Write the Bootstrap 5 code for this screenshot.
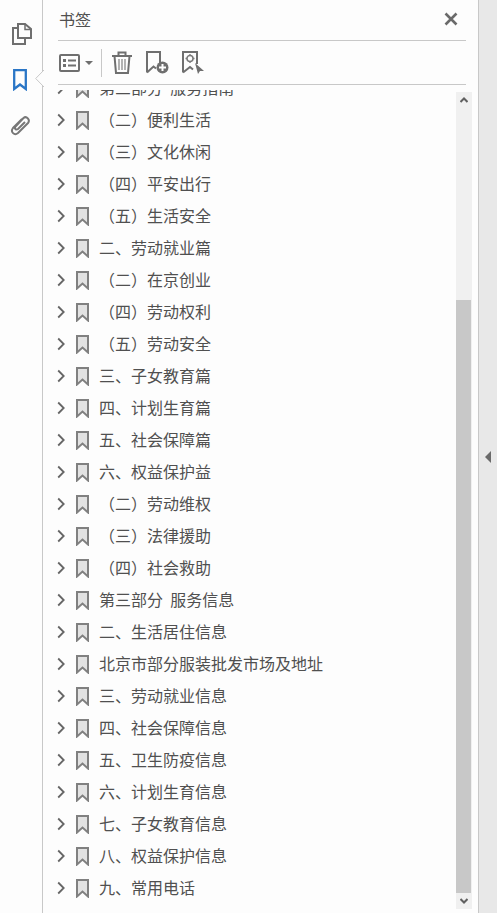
<!DOCTYPE html>
<html lang="zh">
<head>
<meta charset="utf-8">
<title>书签</title>
<link href="https://cdn.jsdelivr.net/npm/bootstrap@5.3.0/dist/css/bootstrap.min.css" rel="stylesheet">
<style>
html,body{height:100%;overflow:hidden;}
body{background:#fdfdfd;color:#505050;font-family:"Noto Sans CJK SC","Liberation Sans",sans-serif;font-size:16px;line-height:1;}
.shell{height:913px;}
.rail{width:43px;border-right:1px solid #c8c8c8;padding-top:22px;gap:24px;}
.rail svg{display:block;}
.ico-pages{margin-left:12px;}
.ico-mark{margin-left:13px;}
.ico-clip{margin-left:10px;}
.notch{position:absolute;left:35px;top:70px;width:9px;height:17px;}
.pane{width:435px;padding-left:14px;}
.strip{width:19px;background:#e8e8e8;border-left:1px solid #c8c8c8;}
.strip svg{margin-top:451px;margin-left:6px;display:block;}
.head{height:41px;width:408px;margin-left:1px;border-bottom:1px solid #c8c8c8;padding:0 0 3px 1px;}
.tools{height:44px;width:408px;margin-left:1px;border-bottom:1px solid #c8c8c8;padding-left:1px;}
.caret-ico{margin-left:5px;}
.sep{width:1px;height:28px;background:#c8c8c8;margin-left:8px;}
.ico-trash{margin-left:9px;}
.ico-add{margin-left:13px;}
.ico-find{margin-left:13px;}
.body-area{height:828px;}
.scroller{width:399px;height:819px;margin-top:5px;overflow:hidden;}
.tree{margin-top:-18px;}
.node{height:32px;}
.node-mark{margin:0 10px 0 11px;}
.rowtxt{white-space:pre;position:relative;top:-1px;}
.sbar{width:16px;height:817px;margin-top:7px;background:#f0f0f0;}
.sbtn{height:16px;}
.gap-top{height:192px;}
.thumb{width:15px;background:#c8c8c8;flex:1;}
</style>
</head>
<body>
<svg width="0" height="0" class="d-block position-absolute">
  <symbol id="bm" viewBox="0 0 13 19">
    <path d="M1 1H12V17.500L6.500 12.500L1 17.500Z" fill="#e2e2e2" stroke="#808080" stroke-width="2"/>
  </symbol>
  <symbol id="chev" viewBox="0 0 8 14">
    <path d="M1.200 1.500L6.700 7L1.200 12.500" fill="none" stroke="#666" stroke-width="1.800"/>
  </symbol>
</svg>
<div class="shell d-flex position-relative">
  <div class="rail d-flex flex-column align-items-start flex-shrink-0">
    <svg class="ico-pages" width="20" height="23" viewBox="0 0 20 23"><path d="M6 2H13L19 7V16H6Z" fill="none" stroke="#6f6f6f" stroke-width="2"/><path d="M13 1.500V7.500H19" fill="none" stroke="#6f6f6f" stroke-width="1.500"/><path d="M6 6H1V22H13V16" fill="none" stroke="#6f6f6f" stroke-width="2"/></svg>
    <svg class="ico-mark" width="14" height="22" viewBox="0 0 14 22"><path d="M1.200 1.200H12.800V20L7 15.500L1.200 20Z" fill="none" stroke="#2a76c6" stroke-width="2.300"/></svg>
    <svg class="ico-clip" width="21" height="21" viewBox="0 0 21 21"><path d="M12 4L3 13C0 17 4.500 21 8 18L18 8C20.500 5 16.500 0.500 13.500 3L5.500 11.500C4 13.500 6 15.500 8 14L15 7" fill="none" stroke="#777" stroke-width="2"/></svg>
  </div>
  <svg class="notch" viewBox="0 0 9 17"><path d="M9 0L0.700 8.500L9 17" fill="#fdfdfd" stroke="#c8c8c8" stroke-width="1"/></svg>
  <div class="pane flex-shrink-0">
    <div class="head d-flex align-items-center justify-content-between">
      <span>书签</span>
      <svg class="me-2" width="14" height="14" viewBox="0 0 14 14"><path d="M1.500 1.500L12.500 12.500M12.500 1.500L1.500 12.500" stroke="#6a6a6a" stroke-width="2.600"/></svg>
    </div>
    <div class="tools d-flex align-items-center">
      <svg width="21" height="18" viewBox="0 0 21 18"><rect x="1" y="1" width="19" height="16" rx="1" fill="none" stroke="#6f6f6f" stroke-width="2"/><rect x="4" y="5" width="3" height="3" fill="#6f6f6f"/><rect x="4" y="10" width="3" height="3" fill="#6f6f6f"/><rect x="9" y="5.500" width="8" height="2" fill="#6f6f6f"/><rect x="9" y="10.500" width="8" height="2" fill="#6f6f6f"/></svg>
      <svg class="caret-ico" width="8" height="4" viewBox="0 0 8 4"><path d="M0 0H8L4 4Z" fill="#6f6f6f"/></svg>
      <span class="sep"></span>
      <svg class="ico-trash" width="22" height="23" viewBox="0 0 22 23"><path d="M1 5H21M7.500 4.500V1.500H14.500V4.500" fill="none" stroke="#6f6f6f" stroke-width="2"/><path d="M3.500 5L5 22H17L18.500 5" fill="none" stroke="#6f6f6f" stroke-width="2"/><path d="M8 8V19M11 8V19M14 8V19" stroke="#8a8a8a" stroke-width="1.300"/></svg>
      <svg class="ico-add" width="23" height="23" viewBox="0 0 23 23"><path d="M1 21.500V1H14V12M1 21.500L7.500 15.500L10 17.500" fill="none" stroke="#6f6f6f" stroke-width="2"/><circle cx="16.500" cy="16.500" r="6" fill="#6f6f6f"/><path d="M16.500 13V20M13 16.500H20" stroke="#fff" stroke-width="2"/></svg>
      <svg class="ico-find" width="22" height="23" viewBox="0 0 22 23"><path d="M1 21.500V1H15V13M1 21.500L8 16L11 18.500" fill="none" stroke="#6f6f6f" stroke-width="2"/><circle cx="8" cy="7.500" r="3" fill="none" stroke="#7a7a7a" stroke-width="1.500"/><path d="M8 3V4.500M8 10.500V12M3.500 7.500H5M11 7.500H12.500" stroke="#7a7a7a" stroke-width="1.300"/><path d="M13 12L22 20H18L16 23Z" fill="#6f6f6f"/></svg>
    </div>
    <div class="body-area d-flex">
      <div class="scroller flex-shrink-0">
        <div class="tree">
          <div class="node d-flex align-items-center"><svg width="8" height="14"><use href="#chev"/></svg><svg class="node-mark" width="13" height="19"><use href="#bm"/></svg><span class="rowtxt">第三部分  服务指南</span></div>
          <div class="node d-flex align-items-center"><svg width="8" height="14"><use href="#chev"/></svg><svg class="node-mark" width="13" height="19"><use href="#bm"/></svg><span class="rowtxt">（二）便利生活</span></div>
          <div class="node d-flex align-items-center"><svg width="8" height="14"><use href="#chev"/></svg><svg class="node-mark" width="13" height="19"><use href="#bm"/></svg><span class="rowtxt">（三）文化休闲</span></div>
          <div class="node d-flex align-items-center"><svg width="8" height="14"><use href="#chev"/></svg><svg class="node-mark" width="13" height="19"><use href="#bm"/></svg><span class="rowtxt">（四）平安出行</span></div>
          <div class="node d-flex align-items-center"><svg width="8" height="14"><use href="#chev"/></svg><svg class="node-mark" width="13" height="19"><use href="#bm"/></svg><span class="rowtxt">（五）生活安全</span></div>
          <div class="node d-flex align-items-center"><svg width="8" height="14"><use href="#chev"/></svg><svg class="node-mark" width="13" height="19"><use href="#bm"/></svg><span class="rowtxt">二、劳动就业篇</span></div>
          <div class="node d-flex align-items-center"><svg width="8" height="14"><use href="#chev"/></svg><svg class="node-mark" width="13" height="19"><use href="#bm"/></svg><span class="rowtxt">（二）在京创业</span></div>
          <div class="node d-flex align-items-center"><svg width="8" height="14"><use href="#chev"/></svg><svg class="node-mark" width="13" height="19"><use href="#bm"/></svg><span class="rowtxt">（四）劳动权利</span></div>
          <div class="node d-flex align-items-center"><svg width="8" height="14"><use href="#chev"/></svg><svg class="node-mark" width="13" height="19"><use href="#bm"/></svg><span class="rowtxt">（五）劳动安全</span></div>
          <div class="node d-flex align-items-center"><svg width="8" height="14"><use href="#chev"/></svg><svg class="node-mark" width="13" height="19"><use href="#bm"/></svg><span class="rowtxt">三、子女教育篇</span></div>
          <div class="node d-flex align-items-center"><svg width="8" height="14"><use href="#chev"/></svg><svg class="node-mark" width="13" height="19"><use href="#bm"/></svg><span class="rowtxt">四、计划生育篇</span></div>
          <div class="node d-flex align-items-center"><svg width="8" height="14"><use href="#chev"/></svg><svg class="node-mark" width="13" height="19"><use href="#bm"/></svg><span class="rowtxt">五、社会保障篇</span></div>
          <div class="node d-flex align-items-center"><svg width="8" height="14"><use href="#chev"/></svg><svg class="node-mark" width="13" height="19"><use href="#bm"/></svg><span class="rowtxt">六、权益保护益</span></div>
          <div class="node d-flex align-items-center"><svg width="8" height="14"><use href="#chev"/></svg><svg class="node-mark" width="13" height="19"><use href="#bm"/></svg><span class="rowtxt">（二）劳动维权</span></div>
          <div class="node d-flex align-items-center"><svg width="8" height="14"><use href="#chev"/></svg><svg class="node-mark" width="13" height="19"><use href="#bm"/></svg><span class="rowtxt">（三）法律援助</span></div>
          <div class="node d-flex align-items-center"><svg width="8" height="14"><use href="#chev"/></svg><svg class="node-mark" width="13" height="19"><use href="#bm"/></svg><span class="rowtxt">（四）社会救助</span></div>
          <div class="node d-flex align-items-center"><svg width="8" height="14"><use href="#chev"/></svg><svg class="node-mark" width="13" height="19"><use href="#bm"/></svg><span class="rowtxt">第三部分  服务信息</span></div>
          <div class="node d-flex align-items-center"><svg width="8" height="14"><use href="#chev"/></svg><svg class="node-mark" width="13" height="19"><use href="#bm"/></svg><span class="rowtxt">二、生活居住信息</span></div>
          <div class="node d-flex align-items-center"><svg width="8" height="14"><use href="#chev"/></svg><svg class="node-mark" width="13" height="19"><use href="#bm"/></svg><span class="rowtxt">北京市部分服装批发市场及地址</span></div>
          <div class="node d-flex align-items-center"><svg width="8" height="14"><use href="#chev"/></svg><svg class="node-mark" width="13" height="19"><use href="#bm"/></svg><span class="rowtxt">三、劳动就业信息</span></div>
          <div class="node d-flex align-items-center"><svg width="8" height="14"><use href="#chev"/></svg><svg class="node-mark" width="13" height="19"><use href="#bm"/></svg><span class="rowtxt">四、社会保障信息</span></div>
          <div class="node d-flex align-items-center"><svg width="8" height="14"><use href="#chev"/></svg><svg class="node-mark" width="13" height="19"><use href="#bm"/></svg><span class="rowtxt">五、卫生防疫信息</span></div>
          <div class="node d-flex align-items-center"><svg width="8" height="14"><use href="#chev"/></svg><svg class="node-mark" width="13" height="19"><use href="#bm"/></svg><span class="rowtxt">六、计划生育信息</span></div>
          <div class="node d-flex align-items-center"><svg width="8" height="14"><use href="#chev"/></svg><svg class="node-mark" width="13" height="19"><use href="#bm"/></svg><span class="rowtxt">七、子女教育信息</span></div>
          <div class="node d-flex align-items-center"><svg width="8" height="14"><use href="#chev"/></svg><svg class="node-mark" width="13" height="19"><use href="#bm"/></svg><span class="rowtxt">八、权益保护信息</span></div>
          <div class="node d-flex align-items-center"><svg width="8" height="14"><use href="#chev"/></svg><svg class="node-mark" width="13" height="19"><use href="#bm"/></svg><span class="rowtxt">九、常用电话</span></div>
        </div>
      </div>
      <div class="sbar d-flex flex-column flex-shrink-0">
        <div class="sbtn d-flex align-items-center justify-content-center"><svg width="8" height="6" viewBox="0 0 8 6"><path d="M0.500 5L4 1.500L7.500 5" fill="none" stroke="#606060" stroke-width="2"/></svg></div>
        <div class="gap-top"></div>
        <div class="thumb"></div>
        <div class="sbtn d-flex align-items-center justify-content-center"><svg width="8" height="6" viewBox="0 0 8 6"><path d="M0.500 1L4 4.500L7.500 1" fill="none" stroke="#606060" stroke-width="2"/></svg></div>
      </div>
    </div>
  </div>
  <div class="strip flex-grow-1"><svg width="7" height="12" viewBox="0 0 7 12"><path d="M6 0V12L0 6Z" fill="#6a6a6a"/></svg></div>
</div>
</body>
</html>
